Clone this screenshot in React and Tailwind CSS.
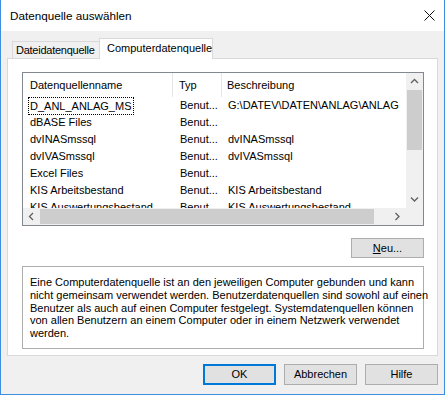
import React from 'react';

const rows = [
  { name: 'D_ANL_ANLAG_MS', typ: 'Benut...', desc: 'G:\\DATEV\\DATEN\\ANLAG\\ANLAG', focus: true },
  { name: 'dBASE Files', typ: 'Benut...', desc: '' },
  { name: 'dvINASmssql', typ: 'Benut...', desc: 'dvINASmssql' },
  { name: 'dvIVASmssql', typ: 'Benut...', desc: 'dvIVASmssql' },
  { name: 'Excel Files', typ: 'Benut...', desc: '' },
  { name: 'KIS Arbeitsbestand', typ: 'Benut...', desc: 'KIS Arbeitsbestand' },
  { name: 'KIS Auswertungsbestand', typ: 'Benut...', desc: 'KIS Auswertungsbestand' },
];

// kleiner Pfeil für die Scrollbars
const Chevron = ({ dir }) => {
  const d = {
    up: 'M1 5 L4.5 1.5 L8 5',
    down: 'M1 1.5 L4.5 5 L8 1.5',
    left: 'M5 1 L1.5 4.5 L5 8',
    right: 'M1.5 1 L5 4.5 L1.5 8',
  }[dir];
  const vert = dir === 'up' || dir === 'down';
  return (
    <svg width={vert ? 9 : 7} height={vert ? 7 : 9} viewBox={vert ? '0 0 9 7' : '0 0 7 9'}>
      <path d={d} fill="none" stroke="#606060" strokeWidth="1.3" />
    </svg>
  );
};

const WinButton = ({ children, primary }) => (
  <button
    className={`w-[73px] h-[21px] bg-[#e1e1e1] text-[11px] text-black flex items-center justify-center ${
      primary ? 'border-2 border-[#0078d7]' : 'border border-[#adadad]'
    }`}
  >
    {children}
  </button>
);

export default function App() {
  return (
    <div
      className="w-[445px] h-[395px] border border-[#3d8ee0] border-t-0 flex flex-col bg-[#f0f0f0] text-black overflow-hidden"
      style={{ fontFamily: '"Liberation Sans", Arial, sans-serif' }}
    >
      {/* Titelleiste */}
      <div className="h-[31px] bg-white flex items-center justify-between pl-[9px] pr-[9px] shrink-0">
        <span className="text-[11.7px]">Datenquelle auswählen</span>
        <svg width="11" height="11" viewBox="0 0 11 11">
          <path d="M0.5 0.5 L10.5 10.5 M10.5 0.5 L0.5 10.5" stroke="#111" strokeWidth="1" />
        </svg>
      </div>

      <div className="flex-1 flex flex-col px-[6px] pt-[7px] pb-[9px]">
        {/* Reiter */}
        <div className="flex items-end h-[20px] pl-[5px] relative z-10">
          <div className="h-[17px] w-[88px] border border-[#d9d9d9] border-b-0 bg-[#f0f0f0] text-[11px] tracking-[-0.25px] flex items-center pl-[3px] whitespace-nowrap">
            Dateidatenquelle
          </div>
          <div className="h-[21px] w-[114px] -ml-px -mb-px border border-[#d9d9d9] border-b-0 bg-white text-[11px] flex items-center pl-[7px] pb-[2px] whitespace-nowrap">
            Computerdatenquelle
          </div>
        </div>

        {/* Reiterinhalt */}
        <div className="h-[298px] border border-[#d9d9d9] bg-white pl-[14px] pr-[12px] pt-[13px] flex flex-col">
          {/* Liste */}
          <div className="w-[402px] h-[154px] border border-[#828790] grid grid-cols-[1fr_17px] grid-rows-[1fr_17px] text-[11px]">
            <div className="overflow-hidden">
              <div className="flex h-[24px] items-center">
                <div className="w-[150px] h-full pl-[7px] flex items-center border-r border-[#e5e5e5]">Datenquellenname</div>
                <div className="w-[49px] h-full pl-[6px] flex items-center border-r border-[#e5e5e5]">Typ</div>
                <div className="pl-[5px] flex items-center whitespace-nowrap">Beschreibung</div>
              </div>
              {rows.map((r) => (
                <div key={r.name} className="flex h-[17px] items-center whitespace-nowrap">
                  <div className="w-[150px] pl-[6px] flex items-center">
                    {r.focus ? (
                      <span className="outline outline-1 outline-dotted outline-black px-[1px] h-[16px] leading-[16px]">{r.name}</span>
                    ) : (
                      <span className="pl-[1px]">{r.name}</span>
                    )}
                  </div>
                  <div className="w-[49px] pl-[7px] overflow-hidden">{r.typ}</div>
                  <div className="pl-[6px]">{r.desc}</div>
                </div>
              ))}
            </div>
            {/* vertikale Scrollbar */}
            <div className="bg-[#f0f0f0] flex flex-col items-center">
              <div className="h-[17px] flex items-center justify-center"><Chevron dir="up" /></div>
              <div className="w-[15px] h-[60px] bg-[#cdcdcd]" />
              <div className="flex-1" />
              <div className="h-[17px] flex items-center justify-center"><Chevron dir="down" /></div>
            </div>
            {/* horizontale Scrollbar */}
            <div className="bg-[#f0f0f0] flex items-center">
              <div className="w-[17px] flex justify-center"><Chevron dir="left" /></div>
              <div className="w-[334px] h-[15px] bg-[#cdcdcd]" />
              <div className="flex-1" />
              <div className="w-[17px] flex justify-center"><Chevron dir="right" /></div>
            </div>
            <div className="bg-[#f0f0f0]" />
          </div>

          <div className="flex justify-end w-[402px] mt-[12px]">
            <button className="w-[73px] h-[20px] bg-[#e1e1e1] border border-[#adadad] text-[11px] flex items-center justify-center">
              <span><span className="underline">N</span>eu...</span>
            </button>
          </div>

          <div className="w-[402px] h-[83px] mt-[8px] border border-[#adadad] pl-[7px] pt-[9px] text-[11px] leading-[12.8px] whitespace-nowrap">
            Eine Computerdatenquelle ist an den jeweiligen Computer gebunden und kann<br />
            nicht gemeinsam verwendet werden. Benutzerdatenquellen sind sowohl auf einen<br />
            Benutzer als auch auf einen Computer festgelegt. Systemdatenquellen können<br />
            von allen Benutzern an einem Computer oder in einem Netzwerk verwendet<br />
            werden.
          </div>
        </div>

        {/* Schaltflächen */}
        <div className="flex justify-end gap-[8px] mt-[8px]">
          <WinButton primary>OK</WinButton>
          <WinButton>Abbrechen</WinButton>
          <WinButton>Hilfe</WinButton>
        </div>
      </div>
    </div>
  );
}
